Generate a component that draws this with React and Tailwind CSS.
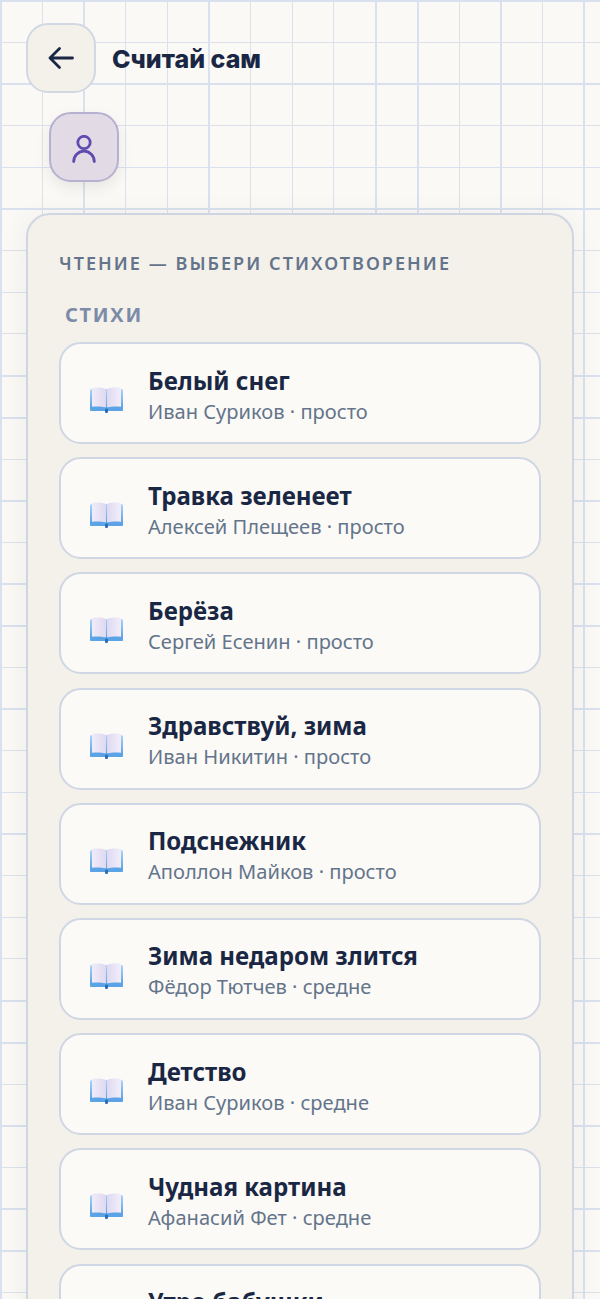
const Book = () => (
  <svg width="33" height="26" viewBox="0 0 33 26" className="shrink-0">
    <defs>
      <linearGradient id="cv" x1="0" y1="0" x2="0" y2="1">
        <stop offset="0" stopColor="#a9d3f5" />
        <stop offset="1" stopColor="#4f9ae2" />
      </linearGradient>
      <linearGradient id="pl" x1="0" y1="0" x2="1" y2="0">
        <stop offset="0" stopColor="#f0ecfa" />
        <stop offset="1" stopColor="#ded9f0" />
      </linearGradient>
      <linearGradient id="pr" x1="0" y1="0" x2="1" y2="0">
        <stop offset="0" stopColor="#ded9f0" />
        <stop offset="1" stopColor="#f2eefb" />
      </linearGradient>
    </defs>
    <rect x="0" y="2" width="33" height="22" rx="2" fill="url(#cv)" />
    <path d="M2 1 C7 0.2 12 0.6 16 2 V20.5 C12 19.4 7 19 2 19.8 Z" fill="url(#pl)" />
    <path d="M31 1 C26 0.2 21 0.6 17 2 V20.5 C21 19.4 26 19 31 19.8 Z" fill="url(#pr)" />
    <rect x="0" y="20.5" width="33" height="3.5" rx="1" fill="#5aa3e6" />
    <rect x="15" y="21.5" width="3" height="4.5" rx="1.2" fill="#2d6db5" />
  </svg>
);

const poems = [
  ["Белый снег", "Иван Суриков · просто"],
  ["Травка зеленеет", "Алексей Плещеев · просто"],
  ["Берёза", "Сергей Есенин · просто"],
  ["Здравствуй, зима", "Иван Никитин · просто"],
  ["Подснежник", "Аполлон Майков · просто"],
  ["Зима недаром злится", "Фёдор Тютчев · средне"],
  ["Детство", "Иван Суриков · средне"],
  ["Чудная картина", "Афанасий Фет · средне"],
  ["Утро бабушки", "Иван Суриков · средне"],
];

export default function App() {
  return (
    <div className="h-[1299px] overflow-hidden bg-[#fbf9f5] font-['Noto_Sans',sans-serif] bg-[repeating-linear-gradient(to_right,#d9e1ee_0,#d9e1ee_2px,transparent_2px,transparent_42px,#dbe2ec_42px,#dbe2ec_43px,transparent_43px,transparent_83.4px,#d9e1ee_83.4px,#d9e1ee_85px,transparent_85px,transparent_125px,#dbe2ec_125px,#dbe2ec_126px,transparent_126px,transparent_166.6px,#d9e1ee_166.6px,#d9e1ee_168.4px,transparent_168.4px,transparent_208.333px),repeating-linear-gradient(to_bottom,#d9e1ee_0,#d9e1ee_2px,transparent_2px,transparent_42px,#dbe2ec_42px,#dbe2ec_43px,transparent_43px,transparent_83.4px,#d9e1ee_83.4px,#d9e1ee_85px,transparent_85px,transparent_125px,#dbe2ec_125px,#dbe2ec_126px,transparent_126px,transparent_166.6px,#d9e1ee_166.6px,#d9e1ee_168.4px,transparent_168.4px,transparent_208.333px)]">
      <div className="flex flex-col px-[26px] pt-[23px]">
        <div className="flex items-center gap-[16px]">
          <div className="flex h-[70px] w-[70px] items-center justify-center rounded-[22px] border-2 border-[#d2d8e3] bg-[#f4f1ea]">
            <svg width="26" height="24" viewBox="0 0 26 24" fill="none" stroke="#1a2744" strokeWidth="2.8" strokeLinecap="round" strokeLinejoin="round">
              <path d="M24.5 12H2M11.5 2.5L2 12L11.5 21.5" />
            </svg>
          </div>
          <h1 className="mt-[3px] font-['Inter',sans-serif] text-[25px] font-extrabold leading-none text-[#1a2744]">Считай сам</h1>
        </div>
        <div className="ml-[22.5px] mt-[19px] flex h-[70px] w-[70px] items-center justify-center rounded-[22px] border-2 border-[#b8b0d0] bg-[#e2dbe6] shadow-[0_6px_14px_rgba(30,40,70,0.09)]">
          <svg className="mt-[3px]" width="24" height="28" viewBox="0 0 24 28" fill="none" stroke="#5e4bb0" strokeWidth="2.8" strokeLinecap="round">
            <circle cx="12" cy="7.5" r="6.2" />
            <path d="M1.7 26.5a10.3 10.3 0 0 1 20.6 0" />
          </svg>
        </div>
        <section className="mt-[31px] rounded-t-[24px] border-2 border-[#cfd6e3] bg-[#f4f1ea] px-[31px] pt-[35px] shadow-[0_4px_30px_rgba(30,40,70,0.06)]">
          <h2 className="text-[18px] font-semibold leading-[26px] tracking-[2.05px] text-[#64748b]">ЧТЕНИЕ — ВЫБЕРИ СТИХОТВОРЕНИЕ</h2>
          <h3 className="ml-[6px] mt-[26px] text-[20px] font-bold leading-[26px] tracking-[1.7px] text-[#7c8ca8]">СТИХИ</h3>
          <div className="mt-[14px] flex flex-col gap-[13.2px]">
            {poems.map(([t, s]) => (
              <div key={t} className="flex h-[102px] items-center gap-[25px] rounded-[22px] border-2 border-[#cfd6e4] bg-[#fbfaf6] px-[29px]">
                <div className="mt-[14px]"><Book /></div>
                <div className="mt-[4px] flex flex-col">
                  <span className="text-[24.1px] font-bold leading-[32px] text-[#1a2744]">{t}</span>
                  <span className="mt-[1px] text-[20.1px] leading-[28px] text-[#64748b]">{s}</span>
                </div>
              </div>
            ))}
          </div>
        </section>
      </div>
    </div>
  );
}
